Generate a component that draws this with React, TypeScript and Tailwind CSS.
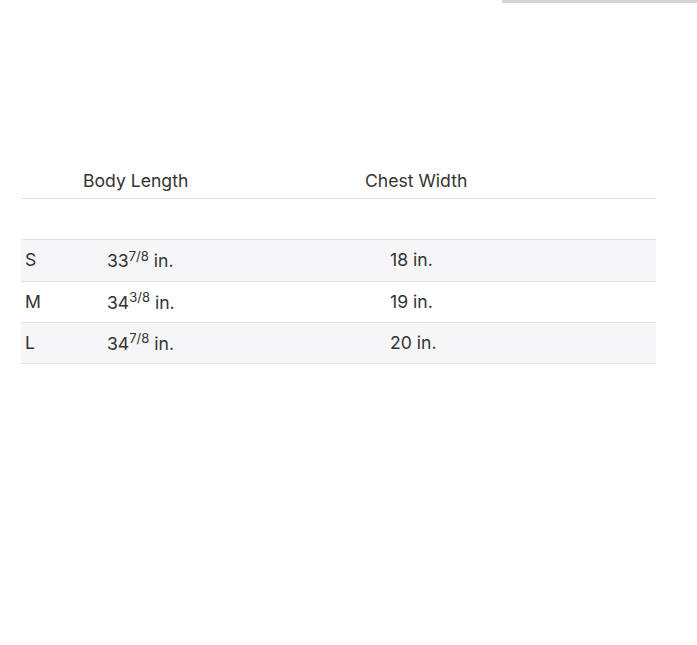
const rows = [
  { size: 'S', whole: '33', frac: '7/8', chest: '18' },
  { size: 'M', whole: '34', frac: '3/8', chest: '19' },
  { size: 'L', whole: '34', frac: '7/8', chest: '20' },
];

export default function App() {
  return (
    <div className="relative h-[645px] w-[697px] bg-white text-[17.6px] text-[#333] [font-family:Inter,'Liberation_Sans',sans-serif]">
      <div className="absolute right-0 top-0 h-[3px] w-[195px] bg-[#d6d6d6]" />

      <div className="pl-[21px] pt-[163px]">
        <div className="w-[635px]">
          {/* header */}
          <div className="grid h-[36px] grid-cols-[62px_282px_1fr] items-center border-b border-[#e2e2e2] pt-[2px]">
            <div />
            <div>Body Length</div>
            <div>Chest Width</div>
          </div>
          <div className="h-[41px] border-b border-[#e2e2e2]" />

          {rows.map((row, index) => (
            <div
              key={row.size}
              className={`grid grid-cols-[62px_282px_1fr] items-center border-b border-[#e2e2e2] ${
                index === 0 ? 'h-[42px]' : 'h-[41px]'
              } ${index % 2 === 0 ? 'bg-[#f6f6f8]' : 'bg-white'}`}
            >
              <div className="pl-[4px]">{row.size}</div>
              <div className="pl-[24px] pt-[2px]">
                {row.whole}
                <sup className="text-[13px]">{row.frac}</sup> in.
              </div>
              <div className="pl-[25px]">{row.chest} in.</div>
            </div>
          ))}
        </div>
      </div>
    </div>
  );
}
